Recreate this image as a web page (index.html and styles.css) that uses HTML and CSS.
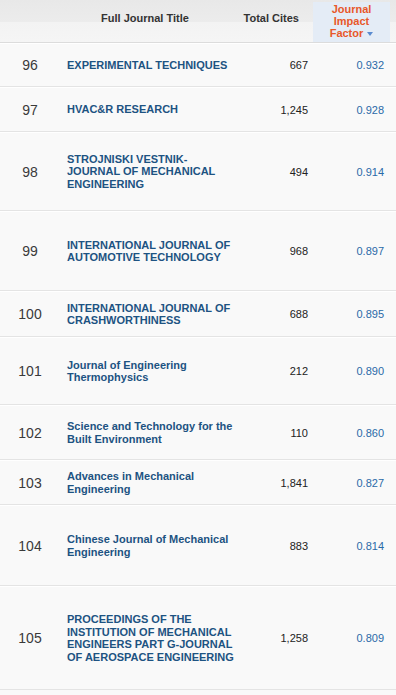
FILE: index.html
```html
<!DOCTYPE html>
<html>
<head>
<meta charset="utf-8">
<link rel="stylesheet" href="styles.css">
</head>
<body>
<div class="table">
  <div class="head">
    <div class="h-rank"></div>
    <div class="h-title">Full Journal Title</div>
    <div class="h-cites">Total Cites</div>
    <div class="h-jif"><span class="h-jif-text">Journal<br>Impact<br>Factor <span class="caret"></span></span></div>
    <div class="h-next"></div>
  </div>
  <div class="row r44"><div class="c-rank">96</div><div class="c-title">EXPERIMENTAL TECHNIQUES</div><div class="c-cites">667</div><div class="c-jif">0.932</div></div>
  <div class="row r45"><div class="c-rank">97</div><div class="c-title">HVAC&amp;R RESEARCH</div><div class="c-cites">1,245</div><div class="c-jif">0.928</div></div>
  <div class="row r79"><div class="c-rank">98</div><div class="c-title">STROJNISKI VESTNIK-<br>JOURNAL OF MECHANICAL ENGINEERING</div><div class="c-cites">494</div><div class="c-jif">0.914</div></div>
  <div class="row r80"><div class="c-rank">99</div><div class="c-title">INTERNATIONAL JOURNAL OF AUTOMOTIVE TECHNOLOGY</div><div class="c-cites">968</div><div class="c-jif">0.897</div></div>
  <div class="row r46"><div class="c-rank">100</div><div class="c-title">INTERNATIONAL JOURNAL OF CRASHWORTHINESS</div><div class="c-cites">688</div><div class="c-jif">0.895</div></div>
  <div class="row r68"><div class="c-rank">101</div><div class="c-title">Journal of Engineering Thermophysics</div><div class="c-cites">212</div><div class="c-jif">0.890</div></div>
  <div class="row r55"><div class="c-rank">102</div><div class="c-title">Science and Technology for the Built Environment</div><div class="c-cites">110</div><div class="c-jif">0.860</div></div>
  <div class="row r45"><div class="c-rank">103</div><div class="c-title">Advances in Mechanical Engineering</div><div class="c-cites">1,841</div><div class="c-jif">0.827</div></div>
  <div class="row r81"><div class="c-rank">104</div><div class="c-title">Chinese Journal of Mechanical Engineering</div><div class="c-cites">883</div><div class="c-jif">0.814</div></div>
  <div class="row r104"><div class="c-rank">105</div><div class="c-title">PROCEEDINGS OF THE INSTITUTION OF MECHANICAL ENGINEERS PART G-JOURNAL OF AEROSPACE ENGINEERING</div><div class="c-cites">1,258</div><div class="c-jif">0.809</div></div>
</div>
</body>
</html>
```
FILE: styles.css
```css
html, body {
  margin: 0;
  padding: 0;
  background: #f9f9f9;
  font-family: "Liberation Sans", Arial, sans-serif;
  color: #333;
}
.table {
  width: 396px;
  overflow: hidden;
}
.head {
  display: flex;
  height: 42px;
  background: linear-gradient(#e8e8e8 0, #ececec 22px, #f3f3f3 22px, #f5f5f5 42px);
  border-bottom: 1px solid #dcdcdc;
  font-size: 11px;
  font-weight: bold;
  color: #333;
}
.h-rank {
  width: 60px;
  flex: none;
}
.h-title {
  width: 170px;
  flex: none;
  text-align: center;
  padding-top: 12px;
}
.h-cites {
  width: 69px;
  flex: none;
  text-align: right;
  padding-top: 12px;
}
.h-jif {
  width: 77px;
  flex: none;
  margin-left: 14px;
  margin-top: 2px;
  background: #e4ecf6;
  color: #e8582a;
  display: flex;
  align-items: center;
  justify-content: center;
  text-align: center;
}
.h-jif-text {
  line-height: 12px;
  padding-bottom: 2px;
}
.h-next {
  width: 6px;
  flex: none;
}
.caret {
  display: inline-block;
  width: 0;
  height: 0;
  border-left: 3px solid transparent;
  border-right: 3px solid transparent;
  border-top: 4px solid #5a8bd0;
  vertical-align: middle;
  margin-left: 1px;
}
.row {
  display: flex;
  align-items: center;
  background: #f9f9f9;
  border-top: 1px solid #ffffff;
  border-bottom: 1px solid #e4e4e4;
  box-sizing: border-box;
}
.c-rank {
  width: 60px;
  flex: none;
  text-align: center;
  font-size: 14px;
  color: #3a3a3a;
}
.c-title {
  width: 172px;
  flex: none;
  padding-left: 7px;
  font-size: 11px;
  line-height: 12.5px;
  font-weight: bold;
  color: #1d5382;
}
.c-cites {
  width: 69px;
  flex: none;
  text-align: right;
  font-size: 11px;
  color: #222;
}
.c-jif {
  width: 76px;
  flex: none;
  text-align: right;
  font-size: 11px;
  color: #2a6aa8;
}
.r44 { height: 44px; }
.r45 { height: 45px; }
.r46 { height: 46px; }
.r55 { height: 55px; }
.r68 { height: 68px; }
.r79 { height: 79px; }
.r80 { height: 80px; }
.r81 { height: 81px; }
.r104 { height: 104px; }
```
